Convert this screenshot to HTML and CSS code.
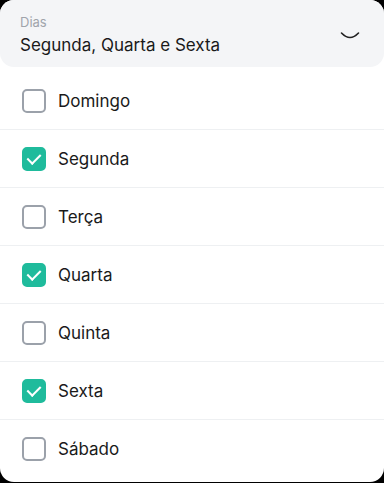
FILE: index.html
```html
<!DOCTYPE html>
<html lang="pt">
<head>
    <meta charset="UTF-8">
    <meta name="viewport" content="width=device-width, initial-scale=1.0">
    <title>Dias</title>
    <link rel="stylesheet" href="styles.css">
</head>
<body>
    <div class="card">
        <div class="select">
            <div class="select-text">
                <span class="label">Dias</span>
                <span class="value">Segunda, Quarta e Sexta</span>
            </div>
            <svg class="chevron" width="20" height="12" viewBox="0 0 20 12">
                <path d="M1.5 3 Q10 12 18.5 3" fill="none" stroke="#222" stroke-width="1.6" stroke-linecap="round"/>
            </svg>
        </div>
        <ul class="options">
            <li class="option"><span class="box"></span>Domingo</li>
            <li class="option checked"><span class="box"></span>Segunda</li>
            <li class="option"><span class="box"></span>Terça</li>
            <li class="option checked"><span class="box"></span>Quarta</li>
            <li class="option"><span class="box"></span>Quinta</li>
            <li class="option checked"><span class="box"></span>Sexta</li>
            <li class="option"><span class="box"></span>Sábado</li>
        </ul>
    </div>
</body>
</html>
```

FILE: styles.css
```css
html, body {
    margin: 0;
    background: #000;
}

body {
    font-family: Inter, "Noto Sans", sans-serif;
    color: #1a1a1a;
}

.card {
    width: 384px;
    height: 482px;
    background: #fff;
    border-radius: 14px;
    overflow: hidden;
}

.select {
    height: 67px;
    background: #f4f5f7;
    border-radius: 0 0 14px 14px;
    display: flex;
    align-items: center;
    justify-content: space-between;
    padding: 0 24px 0 20px;
}

.select-text {
    display: flex;
    flex-direction: column;
    gap: 5px;
    margin-top: 2px;
}

.label {
    font-size: 13px;
    color: #a0a4ab;
}

.value {
    font-size: 17px;
    color: #1a1a1a;
}

.chevron {
    margin-top: 4px;
}

.options {
    list-style: none;
    margin: 0;
    padding: 5px 0 0;
}

.option {
    height: 57px;
    display: flex;
    align-items: center;
    gap: 12px;
    padding-left: 22px;
    font-size: 17px;
    border-bottom: 1px solid #eef0f2;
}

.option:last-child {
    border-bottom: none;
}

.box {
    width: 24px;
    height: 24px;
    box-sizing: border-box;
    border: 2px solid #9ba1aa;
    border-radius: 5px;
    position: relative;
}

.checked .box {
    background: #1fbb9c;
    border-color: #1fbb9c;
}

.checked .box::after {
    content: "";
    position: absolute;
    left: 6px;
    top: 2px;
    width: 6px;
    height: 11px;
    border: solid #fff;
    border-width: 0 2.5px 2.5px 0;
    transform: rotate(45deg);
}
```
